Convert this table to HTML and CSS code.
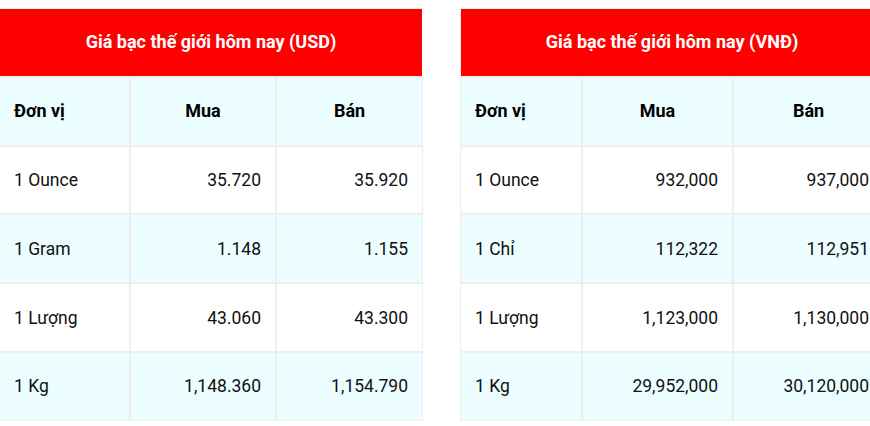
FILE: index.html
```html
<!DOCTYPE html>
<html lang="vi">
<head>
<meta charset="utf-8">
<link rel="stylesheet" href="styles.css">
</head>
<body>
<div class="wrap">
  <table class="price usd">
    <colgroup><col class="c1"><col class="c2"><col class="c3"></colgroup>
    <tr><th class="title" colspan="3">Giá bạc thế giới hôm nay (USD)</th></tr>
    <tr class="alt head"><th class="left">Đơn vị</th><th>Mua</th><th>Bán</th></tr>
    <tr><td>1 Ounce</td><td class="num">35.720</td><td class="num">35.920</td></tr>
    <tr class="alt"><td>1 Gram</td><td class="num">1.148</td><td class="num">1.155</td></tr>
    <tr><td>1 Lượng</td><td class="num">43.060</td><td class="num">43.300</td></tr>
    <tr class="alt"><td>1 Kg</td><td class="num">1,148.360</td><td class="num">1,154.790</td></tr>
  </table>
  <table class="price vnd">
    <colgroup><col class="c1"><col class="c2"><col class="c3"></colgroup>
    <tr><th class="title" colspan="3">Giá bạc thế giới hôm nay (VNĐ)</th></tr>
    <tr class="alt head"><th class="left">Đơn vị</th><th>Mua</th><th>Bán</th></tr>
    <tr><td>1 Ounce</td><td class="num">932,000</td><td class="num">937,000</td></tr>
    <tr class="alt"><td>1 Chỉ</td><td class="num">112,322</td><td class="num">112,951</td></tr>
    <tr><td>1 Lượng</td><td class="num">1,123,000</td><td class="num">1,130,000</td></tr>
    <tr class="alt"><td>1 Kg</td><td class="num">29,952,000</td><td class="num">30,120,000</td></tr>
  </table>
</div>
</body>
</html>
```
FILE: styles.css
```css
html, body {
  margin: 0;
  padding: 0;
  background: #fff;
  overflow: hidden;
}
body {
  font-family: Roboto, "Noto Sans", Arial, sans-serif;
  color: #111;
  width: 870px;
  height: 426px;
}
.wrap {
  display: flex;
  gap: 37px;
  padding-top: 8px;
  margin-left: -1px;
  width: 900px;
}
.price {
  border-collapse: separate;
  border-spacing: 0;
  table-layout: fixed;
  width: 424px;
  flex: none;
  font-size: 17.5px;
}
.price th, .price td {
  border: 1px solid #eee;
  padding: 0 14px;
  box-sizing: border-box;
  height: 68.8px;
  line-height: 20px;
}
.price th {
  font-weight: 700;
  font-size: 18px;
  text-align: center;
  color: #000;
}
.price th.left { text-align: left; }
.price .title {
  background: #ff0000;
  color: #fff;
  font-size: 18px;
  border-right-color: #fff;
}
.alt { background: #ecfeff; }
.num { text-align: right; }
.usd .c1 { width: 131px; }
.usd .c2 { width: 146px; }
.usd .c3 { width: 147px; }
.vnd .c1 { width: 122px; }
.vnd .c2 { width: 151px; }
.vnd .c3 { width: 151px; }
```
